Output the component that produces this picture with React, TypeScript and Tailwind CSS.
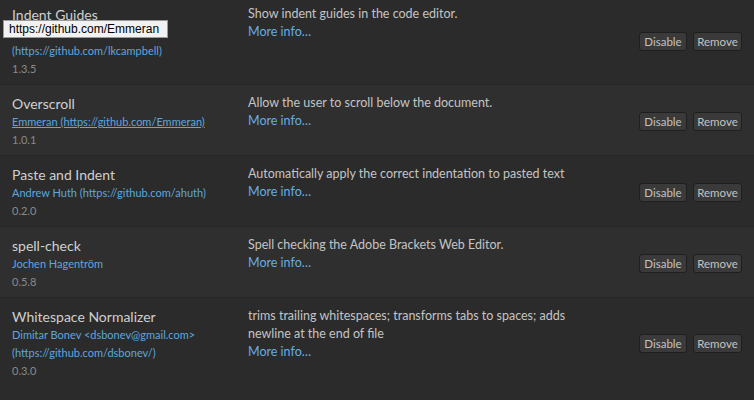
import React from "react";

type Ext = {
  name: string;
  authors: string[];
  underline?: boolean;
  version: string;
  desc: string;
};

const extensions: Ext[] = [
  {
    name: "Indent Guides",
    authors: ["", "(https://github.com/lkcampbell)"],
    version: "1.3.5",
    desc: "Show indent guides in the code editor.",
  },
  {
    name: "Overscroll",
    authors: ["Emmeran (https://github.com/Emmeran)"],
    underline: true,
    version: "1.0.1",
    desc: "Allow the user to scroll below the document.",
  },
  {
    name: "Paste and Indent",
    authors: ["Andrew Huth (https://github.com/ahuth)"],
    version: "0.2.0",
    desc: "Automatically apply the correct indentation to pasted text",
  },
  {
    name: "spell-check",
    authors: ["Jochen Hagentröm"],
    version: "0.5.8",
    desc: "Spell checking the Adobe Brackets Web Editor.",
  },
  {
    name: "Whitespace Normalizer",
    authors: ["Dimitar Bonev <dsbonev@gmail.com>", "(https://github.com/dsbonev/)"],
    version: "0.3.0",
    desc: "trims trailing whitespaces; transforms tabs to spaces; adds newline at the end of file",
  },
];

const Row = ({ ext, odd }: { ext: Ext; odd: boolean }) => (
  <div
    className={`flex items-center px-3 pt-[9px] pb-[6px] border-t border-[#262626] ${
      odd ? "bg-[#2b2b2b]" : "bg-[#2f2f2f]"
    }`}
  >
    <div className="w-[224px] shrink-0 self-start">
      <div className="text-[14px] leading-[19px] text-[#cfcfcf]">{ext.name}</div>
      {ext.authors.map((a, i) => (
        <div
          key={i}
          className={`h-[18px] text-[11px] leading-[18px] text-[#5fa6de] ${ext.underline ? "underline" : ""}`}
        >
          {a}
        </div>
      ))}
      <div className="text-[11px] leading-[18px] text-[#8a8a8a]">{ext.version}</div>
    </div>
    <div className="ml-3 w-[330px] shrink-0 self-start text-[12.5px] leading-[18px]">
      <div className="text-[#c4c4c4]">{ext.desc}</div>
      <div className="text-[#66ade4]">More info…</div>
    </div>
    <div className="ml-auto flex gap-[6px]">
      <button className="h-[19px] w-[48px] rounded-[3px] border border-[#1f1f1f] bg-[#3a3a3a] text-[11.5px] leading-none text-[#c2c2c2]">
        Disable
      </button>
      <button className="h-[19px] w-[49px] rounded-[3px] border border-[#1f1f1f] bg-[#3a3a3a] text-[11.5px] leading-none text-[#c2c2c2]">
        Remove
      </button>
    </div>
  </div>
);

export default function App() {
  return (
    <div className="relative h-[400px] w-[754px] overflow-hidden bg-[#2b2b2b] font-['Lato',sans-serif]">
      <div className="-mt-[5px]">
        {extensions.map((ext, i) => (
          <Row key={ext.name} ext={ext} odd={i % 2 === 0} />
        ))}
      </div>
      <div className="absolute left-[3px] top-[20px] h-[18px] w-[165px] border border-[#9a9a9a] bg-[#f2f2f2] pl-[5px] font-['Liberation_Sans',Arial,sans-serif] text-[12px] leading-[16px] text-black">
        https://github.com/Emmeran
      </div>
    </div>
  );
}
